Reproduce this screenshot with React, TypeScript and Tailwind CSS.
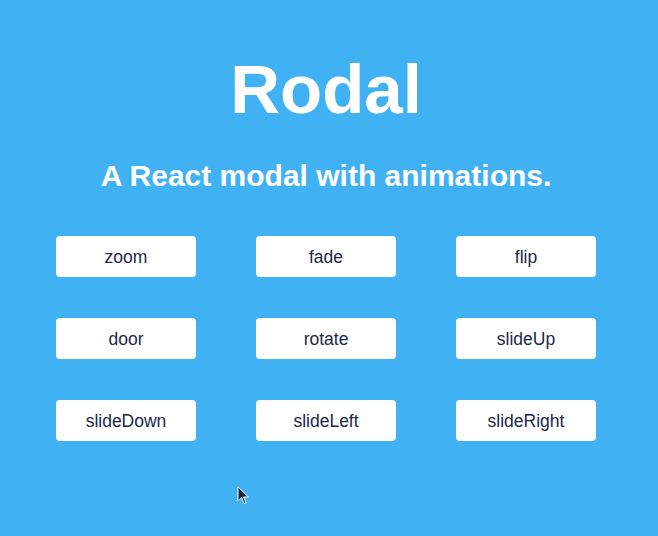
const buttons = ['zoom', 'fade', 'flip', 'door', 'rotate', 'slideUp', 'slideDown', 'slideLeft', 'slideRight'];

function Cursor() {
  return (
    <svg className="absolute left-[237px] top-[486px]" width="13" height="19" viewBox="0 0 13 19">
      <path d="M1 1 L1 15 L4.5 11.5 L7 17.5 L9 16.7 L6.6 11 L11.5 11 Z" fill="#1c2340" stroke="#ffffff" strokeWidth="1" strokeLinejoin="round" />
    </svg>
  );
}

export default function App() {
  return (
    <div className="relative w-[658px] h-[536px] bg-[#40b1f3] pr-[6px] font-['Liberation_Sans',Arial,sans-serif] flex flex-col items-center overflow-hidden">
      <h1 className="mt-[55px] text-[69px] leading-none font-bold text-white">Rodal</h1>
      <h2 className="mt-[37px] text-[30px] leading-none font-bold text-white">A React modal with animations.</h2>
      <div className="mt-[45px] grid grid-cols-3 gap-x-[60px] gap-y-[41px]">
        {buttons.map((b) => (
          <button
            key={b}
            className="w-[140px] h-[41px] pt-[2px] bg-white rounded-[4px] text-[17.5px] text-[#1c2849] flex items-center justify-center"
          >
            {b}
          </button>
        ))}
      </div>
      <Cursor />
    </div>
  );
}
